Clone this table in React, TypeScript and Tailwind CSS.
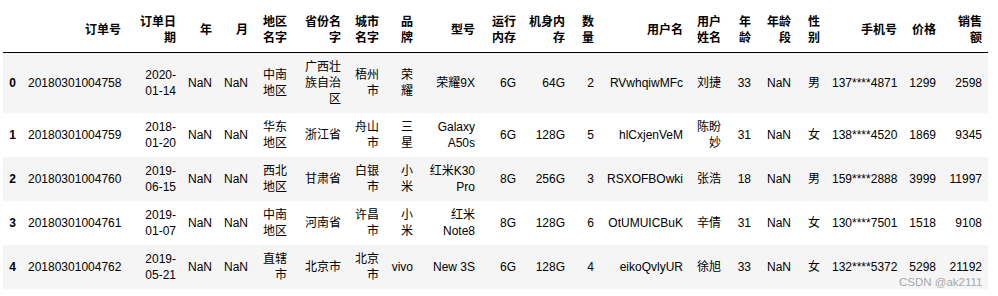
import React from "react";

const widths = [
  "w-[19px]", "w-[105px]", "w-[55px]", "w-[36px]", "w-[36px]", "w-[39px]", "w-[54px]",
  "w-[38px]", "w-[34px]", "w-[62px]", "w-[41px]", "w-[49px]", "w-[29px]", "w-[89px]",
  "w-[38px]", "w-[30px]", "w-[40px]", "w-[29px]", "w-[77px]", "w-[39px]", "w-[46px]",
];

const headers = [
  "", "订单号", "订单日期", "年", "月", "地区名字", "省份名字", "城市名字", "品牌", "型号",
  "运行内存", "机身内存", "数量", "用户名", "用户姓名", "年龄", "年龄段", "性别", "手机号", "价格", "销售额",
];

const rows: string[][] = [
  ["20180301004758", "2020-01-14", "NaN", "NaN", "中南地区", "广西壮族自治区", "梧州市", "荣耀", "荣耀9X", "6G", "64G", "2", "RVwhqiwMFc", "刘捷", "33", "NaN", "男", "137****4871", "1299", "2598"],
  ["20180301004759", "2018-01-20", "NaN", "NaN", "华东地区", "浙江省", "舟山市", "三星", "Galaxy A50s", "6G", "128G", "5", "hlCxjenVeM", "陈盼妙", "31", "NaN", "女", "138****4520", "1869", "9345"],
  ["20180301004760", "2019-06-15", "NaN", "NaN", "西北地区", "甘肃省", "白银市", "小米", "红米K30 Pro", "8G", "256G", "3", "RSXOFBOwki", "张浩", "18", "NaN", "男", "159****2888", "3999", "11997"],
  ["20180301004761", "2019-01-07", "NaN", "NaN", "中南地区", "河南省", "许昌市", "小米", "红米Note8", "8G", "128G", "6", "OtUMUICBuK", "辛倩", "31", "NaN", "女", "130****7501", "1518", "9108"],
  ["20180301004762", "2019-05-21", "NaN", "NaN", "直辖市", "北京市", "北京市", "vivo", "New 3S", "6G", "128G", "4", "eikoQvlyUR", "徐旭", "33", "NaN", "女", "132****5372", "5298", "21192"],
];

const nowrapCols = new Set([0, 12, 17]);

export default function App() {
  return (
    <div
      className="relative bg-white w-[998px] h-[296px] overflow-hidden pt-[8px] pl-[3px] text-black"
      style={{ fontFamily: '"Liberation Sans", Arial, "Noto Sans CJK SC", sans-serif' }}
    >
      <table className="table-fixed border-collapse w-[985px] text-[12px] leading-[16px]">
        <colgroup>
          {widths.map((w, i) => (
            <col key={i} className={w} />
          ))}
        </colgroup>
        <thead>
          <tr className="border-b border-black">
            {headers.map((h, i) => (
              <th key={i} className="px-[6px] py-[6px] text-right align-middle font-bold">
                {h}
              </th>
            ))}
          </tr>
        </thead>
        <tbody>
          {rows.map((r, ri) => (
            <tr key={ri} className={ri % 2 === 0 ? "bg-[#f5f5f5]" : "bg-white"}>
              <th className="px-[6px] py-[6px] text-right align-middle font-bold">{ri}</th>
              {r.map((c, ci) => (
                <td
                  key={ci}
                  className={
                    nowrapCols.has(ci)
                      ? "px-[6px] py-[6px] text-right align-middle whitespace-nowrap"
                      : "px-[6px] py-[6px] text-right align-middle"
                  }
                >
                  {c}
                </td>
              ))}
            </tr>
          ))}
        </tbody>
      </table>
      <div className="absolute left-[899px] top-[275px] text-[11.5px] leading-[14px] text-[#a8a8a8]">
        CSDN @ak2111
      </div>
    </div>
  );
}
